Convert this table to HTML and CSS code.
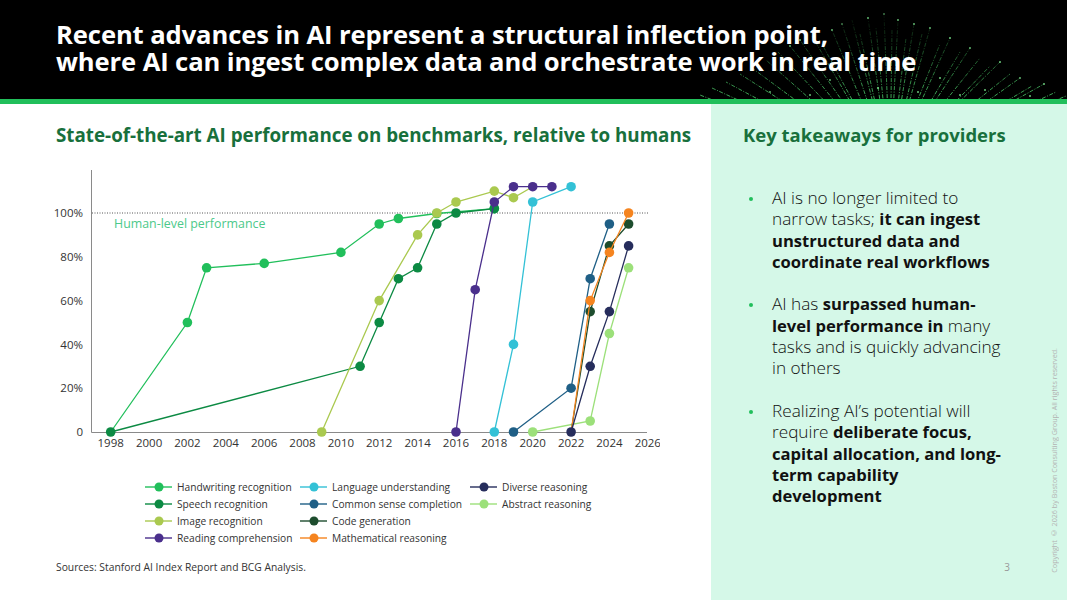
FILE: index.html
```html
<!DOCTYPE html>
<html lang="en">
<head>
<meta charset="utf-8">
<title>AI inflection point</title>
<link rel="stylesheet" href="styles.css">
</head>
<body>
<header class="hdr">
  <svg class="fiber" viewBox="600 0 467 99" width="467" height="99" aria-hidden="true">
    <defs>
      <linearGradient id="fade" gradientUnits="userSpaceOnUse" x1="0" y1="99" x2="0" y2="10">
        <stop offset="0" stop-color="#55de75" stop-opacity="0.85"/>
        <stop offset="0.6" stop-color="#3fb85a" stop-opacity="0.4"/>
        <stop offset="1" stop-color="#3fb85a" stop-opacity="0"/>
      </linearGradient>
    </defs>
    <g stroke="url(#fade)" stroke-width="0.9" fill="none" stroke-dasharray="4 1.5 1 1.5">
      <path d="M890 170L700 95M890 170L712 88M890 170L726 82M890 170L740 74M890 170L752 68M890 170L766 60M890 170L778 52M890 170L790 46M890 170L800 40M890 170L812 36M890 170L822 44M890 170L832 30M890 170L842 24M890 170L852 20M890 170L860 34M890 170L868 18M890 170L876 28M890 170L884 14M890 170L892 30M890 170L898 20M890 170L906 38M890 170L914 24M890 170L922 34M890 170L930 28M890 170L940 44M890 170L950 38M890 170L960 52M890 170L970 48M890 170L980 58M890 170L990 66M890 170L1000 62M890 170L1010 74M890 170L1020 78M890 170L1032 86M890 170L1044 84M890 170L1056 92M890 170L1066 96"/>
    </g>
    <g fill="#7de88f" opacity="0.85">
      <circle cx="752" cy="68" r="0.9"/><circle cx="790" cy="46" r="0.9"/><circle cx="800" cy="40" r="1"/>
      <circle cx="832" cy="30" r="0.9"/><circle cx="842" cy="24" r="0.8"/><circle cx="868" cy="18" r="0.9"/>
      <circle cx="884" cy="14" r="0.8"/><circle cx="898" cy="20" r="0.9"/><circle cx="914" cy="24" r="0.9"/>
      <circle cx="930" cy="28" r="0.9"/><circle cx="950" cy="38" r="1"/><circle cx="970" cy="48" r="0.9"/>
      <circle cx="1000" cy="62" r="1"/><circle cx="1020" cy="78" r="0.9"/><circle cx="1044" cy="84" r="1"/>
      <circle cx="860" cy="62" r="0.9"/><circle cx="905" cy="70" r="1"/><circle cx="830" cy="80" r="0.9"/>
      <circle cx="940" cy="78" r="1"/><circle cx="985" cy="90" r="1"/><circle cx="770" cy="92" r="0.9"/>
      <circle cx="878" cy="88" r="1.1"/><circle cx="918" cy="92" r="1"/><circle cx="810" cy="95" r="1"/>
      <circle cx="1030" cy="96" r="1"/><circle cx="960" cy="95" r="1"/>
    </g>
  </svg>
  <h1 class="title">Recent advances in AI represent a structural inflection point,<br>where AI can ingest complex data and orchestrate work in real time</h1>
</header>
<div class="accent"></div>
<main class="content">
  <section class="left">
    <h2 class="chart-title">State-of-the-art AI performance on benchmarks, relative to humans</h2>
    <svg class="chart" viewBox="40 160 620 318" width="620" height="318">
      <g class="axis">
        <line x1="91.5" y1="170" x2="91.5" y2="432.5"/>
        <line x1="91.5" y1="432.5" x2="647" y2="432.5"/>
      </g>
      <line class="human" x1="92" y1="213" x2="649" y2="213"/>
      <text class="human-label" x="114" y="228">Human-level performance</text>
      <g class="ylab" text-anchor="end">
        <text x="83" y="217">100%</text>
        <text x="83" y="261">80%</text>
        <text x="83" y="305">60%</text>
        <text x="83" y="349">40%</text>
        <text x="83" y="392">20%</text>
        <text x="83" y="436">0</text>
      </g>
      <g class="xlab" text-anchor="middle">
        <text x="110.7" y="447">1998</text><text x="149.1" y="447">2000</text><text x="187.4" y="447">2002</text>
        <text x="225.8" y="447">2004</text><text x="264.2" y="447">2006</text><text x="302.5" y="447">2008</text>
        <text x="340.9" y="447">2010</text><text x="379.2" y="447">2012</text><text x="417.6" y="447">2014</text>
        <text x="456" y="447">2016</text><text x="494.3" y="447">2018</text><text x="532.7" y="447">2020</text>
        <text x="571.1" y="447">2022</text><text x="609.4" y="447">2024</text><text x="647.8" y="447">2026</text>
      </g>

      <g class="series s-hand">
        <polyline points="110.7,432 187.4,322.5 206.6,267.8 264.2,263.4 340.9,252.4 379.2,224 398.4,218.5 436.8,213.5 494.3,208.6"/>
        <circle cx="187.4" cy="322.5" r="4.8"/><circle cx="206.6" cy="267.8" r="4.8"/><circle cx="264.2" cy="263.4" r="4.8"/>
        <circle cx="340.9" cy="252.4" r="4.8"/><circle cx="379.2" cy="224" r="4.8"/><circle cx="398.4" cy="218.5" r="4.8"/>
        <circle cx="436.8" cy="213.5" r="4.8"/><circle cx="494.3" cy="208.6" r="4.8"/>
      </g>
      <g class="series s-speech">
        <polyline points="110.7,432 360.1,366.3 379.2,322.5 398.4,278.7 417.6,267.8 436.8,224 456,213 494.3,208.6"/>
        <circle cx="110.7" cy="432" r="4.8"/><circle cx="360.1" cy="366.3" r="4.8"/><circle cx="379.2" cy="322.5" r="4.8"/>
        <circle cx="398.4" cy="278.7" r="4.8"/><circle cx="417.6" cy="267.8" r="4.8"/><circle cx="436.8" cy="224" r="4.8"/>
        <circle cx="456" cy="213" r="4.8"/><circle cx="494.3" cy="208.6" r="4.8"/>
      </g>
      <g class="series s-image">
        <polyline points="321.7,432 379.2,300.6 417.6,234.9 436.8,213 456,202 494.3,191.1 513.5,197.7 532.7,186.7"/>
        <circle cx="321.7" cy="432" r="4.8"/><circle cx="379.2" cy="300.6" r="4.8"/><circle cx="417.6" cy="234.9" r="4.8"/>
        <circle cx="436.8" cy="213" r="4.8"/><circle cx="456" cy="202" r="4.8"/><circle cx="494.3" cy="191.1" r="4.8"/>
        <circle cx="513.5" cy="197.7" r="4.8"/>
      </g>
      <g class="series s-read">
        <polyline points="456,432 475.2,289.7 494.3,202 513.5,186.7 532.7,186.7 551.9,186.7"/>
        <circle cx="456" cy="432" r="4.8"/><circle cx="475.2" cy="289.7" r="4.8"/><circle cx="494.3" cy="202" r="4.8"/>
        <circle cx="513.5" cy="186.7" r="4.8"/><circle cx="532.7" cy="186.7" r="4.8"/><circle cx="551.9" cy="186.7" r="4.8"/>
      </g>
      <g class="series s-lang">
        <polyline points="494.3,432 513.5,344.4 532.7,202 571.1,186.7"/>
        <circle cx="494.3" cy="432" r="4.8"/><circle cx="513.5" cy="344.4" r="4.8"/><circle cx="532.7" cy="202" r="4.8"/>
        <circle cx="571.1" cy="186.7" r="4.8"/>
      </g>
      <g class="series s-common">
        <polyline points="513.5,432 571.1,388.2 590.2,278.7 609.4,224"/>
        <circle cx="513.5" cy="432" r="4.8"/><circle cx="571.1" cy="388.2" r="4.8"/><circle cx="590.2" cy="278.7" r="4.8"/>
        <circle cx="609.4" cy="224" r="4.8"/>
      </g>
      <g class="series s-abstract">
        <polyline points="532.7,432 590.2,421 609.4,333.5 628.6,267.8"/>
        <circle cx="532.7" cy="432" r="4.8"/><circle cx="590.2" cy="421" r="4.8"/><circle cx="609.4" cy="333.5" r="4.8"/>
        <circle cx="628.6" cy="267.8" r="4.8"/>
      </g>
      <g class="series s-code">
        <polyline points="571.1,432 590.2,311.6 609.4,245.9 628.6,224"/>
        <circle cx="590.2" cy="311.6" r="4.8"/><circle cx="609.4" cy="245.9" r="4.8"/><circle cx="628.6" cy="224" r="4.8"/>
      </g>
      <g class="series s-math">
        <polyline points="571.1,432 590.2,300.6 609.4,252.4 628.6,213"/>
        <circle cx="590.2" cy="300.6" r="4.8"/><circle cx="609.4" cy="252.4" r="4.8"/><circle cx="628.6" cy="213" r="4.8"/>
      </g>
      <g class="series s-diverse">
        <polyline points="571.1,432 590.2,366.3 609.4,311.6 628.6,245.9"/>
        <circle cx="571.1" cy="432" r="4.8"/><circle cx="590.2" cy="366.3" r="4.8"/><circle cx="609.4" cy="311.6" r="4.8"/>
        <circle cx="628.6" cy="245.9" r="4.8"/>
      </g>
    </svg>

    <div class="legend">
      <div class="lg-item"><svg class="mk c-hand" viewBox="0 0 27 10"><line x1="0" y1="5" x2="27" y2="5"/><circle cx="14" cy="5" r="4.5"/></svg>Handwriting recognition</div>
      <div class="lg-item"><svg class="mk c-lang" viewBox="0 0 27 10"><line x1="0" y1="5" x2="27" y2="5"/><circle cx="14" cy="5" r="4.5"/></svg>Language understanding</div>
      <div class="lg-item"><svg class="mk c-diverse" viewBox="0 0 27 10"><line x1="0" y1="5" x2="27" y2="5"/><circle cx="14" cy="5" r="4.5"/></svg>Diverse reasoning</div>
      <div class="lg-item"><svg class="mk c-speech" viewBox="0 0 27 10"><line x1="0" y1="5" x2="27" y2="5"/><circle cx="14" cy="5" r="4.5"/></svg>Speech recognition</div>
      <div class="lg-item"><svg class="mk c-common" viewBox="0 0 27 10"><line x1="0" y1="5" x2="27" y2="5"/><circle cx="14" cy="5" r="4.5"/></svg>Common sense completion</div>
      <div class="lg-item"><svg class="mk c-abstract" viewBox="0 0 27 10"><line x1="0" y1="5" x2="27" y2="5"/><circle cx="14" cy="5" r="4.5"/></svg>Abstract reasoning</div>
      <div class="lg-item"><svg class="mk c-image" viewBox="0 0 27 10"><line x1="0" y1="5" x2="27" y2="5"/><circle cx="14" cy="5" r="4.5"/></svg>Image recognition</div>
      <div class="lg-item"><svg class="mk c-code" viewBox="0 0 27 10"><line x1="0" y1="5" x2="27" y2="5"/><circle cx="14" cy="5" r="4.5"/></svg>Code generation</div>
      <div class="lg-item"></div>
      <div class="lg-item"><svg class="mk c-read" viewBox="0 0 27 10"><line x1="0" y1="5" x2="27" y2="5"/><circle cx="14" cy="5" r="4.5"/></svg>Reading comprehension</div>
      <div class="lg-item"><svg class="mk c-math" viewBox="0 0 27 10"><line x1="0" y1="5" x2="27" y2="5"/><circle cx="14" cy="5" r="4.5"/></svg>Mathematical reasoning</div>
      <div class="lg-item"></div>
    </div>

    <p class="sources">Sources: Stanford AI Index Report and BCG Analysis.</p>
  </section>

  <aside class="right">
    <div class="takeaways">
      <h2 class="kt-title">Key takeaways for providers</h2>
      <ul class="bullets">
        <li><span class="dot"></span><span class="txt">AI is no longer limited to narrow tasks; <b>it can ingest unstructured data and coordinate real workflows</b></span></li>
        <li><span class="dot"></span><span class="txt">AI has <b>surpassed human-level performance in</b> many tasks and is quickly advancing in others</span></li>
        <li><span class="dot"></span><span class="txt">Realizing AI’s potential will require <b>deliberate focus, capital allocation, and long-term capability development</b></span></li>
      </ul>
      <div class="pagenum">3</div>
    </div>
    <div class="copyright">Copyright © 2026 by Boston Consulting Group. All rights reserved.</div>
  </aside>
</main>
</body>
</html>
```

FILE: styles.css
```css
* { box-sizing: border-box; }
html, body { margin: 0; padding: 0; }
body {
  width: 1067px;
  height: 600px;
  overflow: hidden;
  font-family: "Open Sans", "Liberation Sans", sans-serif;
  background: #fff;
  color: #222;
}

.hdr {
  position: relative;
  height: 99px;
  background: #000;
  padding: 21px 0 0 56px;
  overflow: hidden;
}
.fiber {
  position: absolute;
  right: 0;
  top: 0;
}
.title {
  position: relative;
  margin: 0;
  color: #fff;
  font-size: 25.6px;
  line-height: 27px;
  font-weight: 700;
  letter-spacing: -0.1px;
}

.accent {
  height: 5px;
  background: #21bf5b;
}

.content {
  display: flex;
  height: 496px;
}

.left {
  width: 711px;
  padding: 19px 0 0 40px;
}
.chart-title {
  margin: 0 0 13px 16px;
  font-size: 18.8px;
  line-height: 24px;
  font-weight: 700;
  color: #18703c;
}
.chart { display: block; }
.axis line { stroke: #8a8a8a; stroke-width: 1; }
.human { stroke: #555; stroke-width: 1; stroke-dasharray: 1 1.5; }
.human-label { fill: #4cc98a; font-size: 12.4px; }
.ylab text, .xlab text { fill: #333; font-size: 11.5px; }

.series polyline { fill: none; stroke-width: 1.3; }
.s-hand { stroke: #21bf5b; fill: #21bf5b; }
.s-speech { stroke: #0c8a43; fill: #0c8a43; }
.s-image { stroke: #aac94f; fill: #aac94f; }
.s-read { stroke: #4a2f8c; fill: #4a2f8c; }
.s-lang { stroke: #33c1d6; fill: #33c1d6; }
.s-common { stroke: #1f5f86; fill: #1f5f86; }
.s-code { stroke: #1d4d2e; fill: #1d4d2e; }
.s-math { stroke: #f5841f; fill: #f5841f; }
.s-diverse { stroke: #262d5c; fill: #262d5c; }
.s-abstract { stroke: #9ce07a; fill: #9ce07a; }
.series circle { stroke: none; }

.legend {
  display: grid;
  grid-template-columns: 155px 170px 160px;
  grid-auto-rows: 17px;
  margin-left: 105px;
  font-size: 10.2px;
  color: #333;
}
.lg-item {
  display: flex;
  align-items: center;
  gap: 5px;
  white-space: nowrap;
}
.mk { width: 27px; height: 10px; flex: none; }
.mk line { stroke-width: 1.4; }
.c-hand { stroke: #21bf5b; fill: #21bf5b; }
.c-speech { stroke: #0c8a43; fill: #0c8a43; }
.c-image { stroke: #aac94f; fill: #aac94f; }
.c-read { stroke: #4a2f8c; fill: #4a2f8c; }
.c-lang { stroke: #33c1d6; fill: #33c1d6; }
.c-common { stroke: #1f5f86; fill: #1f5f86; }
.c-code { stroke: #1d4d2e; fill: #1d4d2e; }
.c-math { stroke: #f5841f; fill: #f5841f; }
.c-diverse { stroke: #262d5c; fill: #262d5c; }
.c-abstract { stroke: #9ce07a; fill: #9ce07a; }
.mk circle { stroke: none; }

.sources {
  margin: 14px 0 0 16px;
  font-size: 10.3px;
  line-height: 14px;
  color: #333;
}

.right {
  width: 356px;
  background: #d5f8e8;
  display: flex;
  padding: 19px 0 0 32px;
}
.takeaways {
  width: 270px;
  display: flex;
  flex-direction: column;
}
.kt-title {
  margin: 0;
  font-size: 18.5px;
  line-height: 24px;
  font-weight: 700;
  color: #18703c;
}
.bullets {
  list-style: none;
  margin: 40px 0 0 0;
  padding: 0;
  width: 266px;
}
.bullets li {
  display: flex;
  align-items: flex-start;
  margin-bottom: 21.3px;
}
.dot {
  flex: none;
  width: 4px;
  height: 4px;
  border-radius: 50%;
  background: #21bf5b;
  margin: 10px 19px 0 6px;
}
.txt {
  flex: 1;
  font-size: 17.2px;
  line-height: 21.3px;
  font-weight: 300;
  color: #111;
}
.txt b { font-weight: 700; font-size: 16.6px; }
.pagenum {
  margin-top: auto;
  align-self: flex-end;
  margin-bottom: 26px;
  margin-right: 3px;
  font-size: 10px;
  line-height: 14px;
  color: #999;
}
.copyright {
  margin-left: auto;
  margin-right: 8px;
  margin-bottom: 27px;
  align-self: flex-end;
  writing-mode: vertical-rl;
  transform: rotate(180deg);
  font-size: 7.2px;
  line-height: 9px;
  color: #b3b3b3;
  white-space: nowrap;
}
```
